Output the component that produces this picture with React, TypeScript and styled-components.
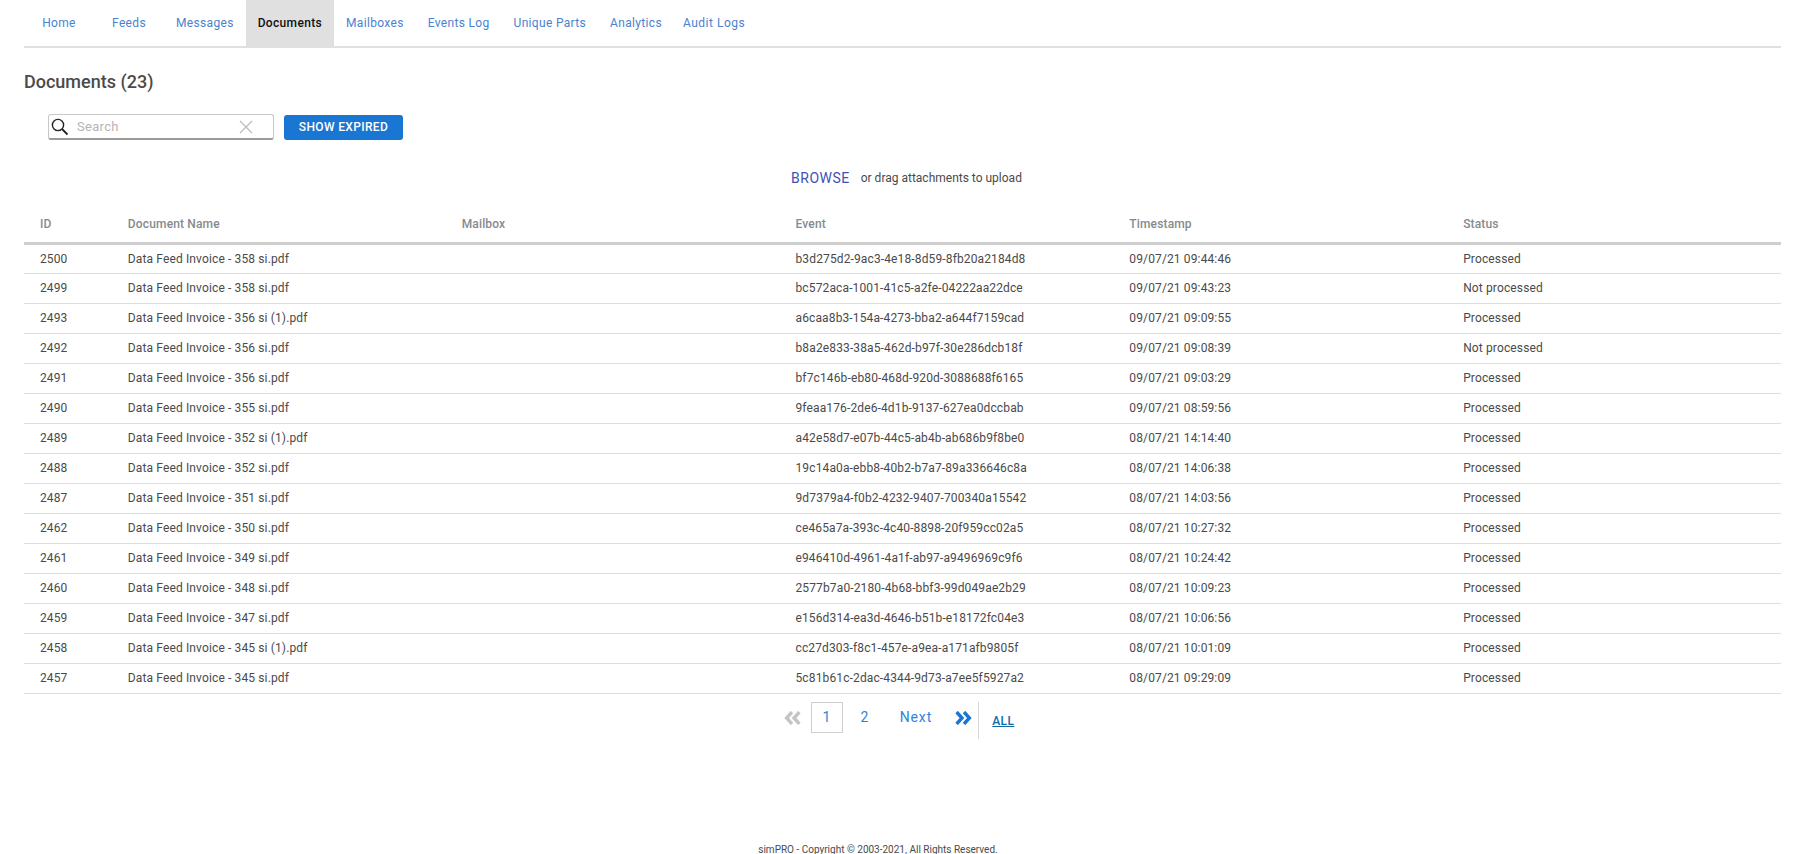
import React from 'react'
import styled, { createGlobalStyle } from 'styled-components'

const GlobalStyle = createGlobalStyle`
html, body {
  margin: 0;
  padding: 0;
  background: #fff;
  overflow: hidden;
  font-family: Roboto, "Liberation Sans", sans-serif;
}
`

const Page = styled.div`
height: 854px;
padding: 0 21px 0 24px;
box-sizing: border-box;
display: flex;
flex-direction: column;
overflow: hidden;
`

const Nav = styled.nav`
display: flex;
height: 46px;
border-bottom: 2px solid #e0e0e0;
flex-shrink: 0;
`

const Tab = styled.a<{ $active?: boolean; $tight?: boolean }>`
display: flex;
align-items: center;
justify-content: center;
box-sizing: border-box;
min-width: 70px;
padding: 0 ${p => (p.$tight ? '9px' : '12px')};
font-size: 12px;
letter-spacing: ${p => (p.$tight ? '0.5px' : '0.33px')};
font-weight: ${p => (p.$active ? 500 : 400)};
color: ${p => (p.$active ? '#111' : '#4a82cf')};
background: ${p => (p.$active ? '#e0e0e0' : 'transparent')};
cursor: pointer;
`

const Title = styled.h1`
margin: 22px 0 0;
font-size: 18px;
line-height: 24px;
font-weight: 500;
color: #4a4a4a;
`

const Toolbar = styled.div`
display: flex;
align-items: center;
gap: 10px;
margin: 20px 0 0 24px;
`

const SearchBox = styled.div`
display: flex;
align-items: center;
box-sizing: border-box;
width: 226px;
height: 26px;
padding: 0 20px 0 1px;
border: 1px solid #c8c8c8;
border-bottom: 2px solid #9a9a9a;
border-radius: 3px;
`

const SearchInput = styled.input`
flex: 1;
min-width: 0;
margin-left: 7px;
border: 0;
outline: 0;
padding: 0;
font: 400 13px Roboto, sans-serif;
letter-spacing: 0.3px;
color: #333;
&::placeholder {
  color: #b5b5b5;
  opacity: 1;
}
`

const ExpiredButton = styled.button`
width: 119px;
height: 25px;
padding: 0;
border: 0;
border-radius: 3px;
background: #1976d2;
color: #fff;
font: 500 12px Roboto, sans-serif;
letter-spacing: 0.35px;
text-transform: uppercase;
cursor: pointer;
`

const Upload = styled.div`
display: flex;
align-items: center;
justify-content: center;
gap: 11px;
margin: 26px 0 0 8px;
height: 24px;
`

const Browse = styled.a`
font-size: 14px;
font-weight: 400;
letter-spacing: 0.5px;
color: #3f51b5;
cursor: pointer;
`

const UploadHint = styled.span`
font-size: 12px;
color: #4a4a4a;
`

const Table = styled.table`
width: 100%;
margin-top: 16px;
border-collapse: collapse;
table-layout: fixed;
`

const HeadCell = styled.th<{ $w: string }>`
width: ${p => p.$w};
height: 37px;
padding: 0 16px;
box-sizing: border-box;
border-bottom: 3px solid #cfcfcf;
text-align: left;
font-size: 12px;
font-weight: 500;
letter-spacing: 0.15px;
color: #868a8e;
`

const Cell = styled.td`
height: 30px;
padding: 0 16px;
box-sizing: border-box;
border-bottom: 1px solid #dedede;
font-size: 12px;
letter-spacing: 0.13px;
color: #4a4a4a;
white-space: nowrap;
`

const Pager = styled.div`
display: flex;
align-items: flex-start;
justify-content: center;
height: 37px;
margin: 8px 0 0 -7px;
flex-shrink: 0;
`

const PagerArrow = styled.span`
display: flex;
align-items: center;
height: 33px;
cursor: pointer;
`

const PageLink = styled.a<{ $current?: boolean }>`
display: flex;
align-items: center;
justify-content: center;
box-sizing: border-box;
min-width: 32px;
height: 31px;
margin-left: ${p => (p.$current ? '10px' : '6px')};
font-size: 14px;
letter-spacing: 0.6px;
color: #2f84d8;
border: 1px solid ${p => (p.$current ? '#cfcfcf' : 'transparent')};
cursor: pointer;
`

const NextLink = styled(PageLink)`
margin: 0 22px 0 18px;
letter-spacing: 0.9px;
`

const AllLink = styled.a`
align-self: stretch;
display: flex;
align-items: center;
margin-left: 6px;
padding: 2px 0 0 13px;
border-left: 1px solid #d6d6d6;
font-size: 12px;
font-weight: 500;
letter-spacing: 0.4px;
color: #0f6aa3;
text-decoration: underline;
cursor: pointer;
`

const Footer = styled.footer`
margin: auto 0 -2px;
padding-right: 49px;
height: 12px;
line-height: 12px;
font-size: 10px;
text-align: center;
color: #4a4a4a;
`

const tabs = ['Home', 'Feeds', 'Messages', 'Documents', 'Mailboxes', 'Events Log', 'Unique Parts', 'Analytics', 'Audit Logs']

const rows = [
  ['2500', 'Data Feed Invoice - 358 si.pdf', 'b3d275d2-9ac3-4e18-8d59-8fb20a2184d8', '09/07/21 09:44:46', 'Processed'],
  ['2499', 'Data Feed Invoice - 358 si.pdf', 'bc572aca-1001-41c5-a2fe-04222aa22dce', '09/07/21 09:43:23', 'Not processed'],
  ['2493', 'Data Feed Invoice - 356 si (1).pdf', 'a6caa8b3-154a-4273-bba2-a644f7159cad', '09/07/21 09:09:55', 'Processed'],
  ['2492', 'Data Feed Invoice - 356 si.pdf', 'b8a2e833-38a5-462d-b97f-30e286dcb18f', '09/07/21 09:08:39', 'Not processed'],
  ['2491', 'Data Feed Invoice - 356 si.pdf', 'bf7c146b-eb80-468d-920d-3088688f6165', '09/07/21 09:03:29', 'Processed'],
  ['2490', 'Data Feed Invoice - 355 si.pdf', '9feaa176-2de6-4d1b-9137-627ea0dccbab', '09/07/21 08:59:56', 'Processed'],
  ['2489', 'Data Feed Invoice - 352 si (1).pdf', 'a42e58d7-e07b-44c5-ab4b-ab686b9f8be0', '08/07/21 14:14:40', 'Processed'],
  ['2488', 'Data Feed Invoice - 352 si.pdf', '19c14a0a-ebb8-40b2-b7a7-89a336646c8a', '08/07/21 14:06:38', 'Processed'],
  ['2487', 'Data Feed Invoice - 351 si.pdf', '9d7379a4-f0b2-4232-9407-700340a15542', '08/07/21 14:03:56', 'Processed'],
  ['2462', 'Data Feed Invoice - 350 si.pdf', 'ce465a7a-393c-4c40-8898-20f959cc02a5', '08/07/21 10:27:32', 'Processed'],
  ['2461', 'Data Feed Invoice - 349 si.pdf', 'e946410d-4961-4a1f-ab97-a9496969c9f6', '08/07/21 10:24:42', 'Processed'],
  ['2460', 'Data Feed Invoice - 348 si.pdf', '2577b7a0-2180-4b68-bbf3-99d049ae2b29', '08/07/21 10:09:23', 'Processed'],
  ['2459', 'Data Feed Invoice - 347 si.pdf', 'e156d314-ea3d-4646-b51b-e18172fc04e3', '08/07/21 10:06:56', 'Processed'],
  ['2458', 'Data Feed Invoice - 345 si (1).pdf', 'cc27d303-f8c1-457e-a9ea-a171afb9805f', '08/07/21 10:01:09', 'Processed'],
  ['2457', 'Data Feed Invoice - 345 si.pdf', '5c81b61c-2dac-4344-9d73-a7ee5f5927a2', '08/07/21 09:29:09', 'Processed'],
]

const SearchIcon = () => (
  <svg width="20" height="20" viewBox="0 0 20 20" fill="none" stroke="#222" strokeWidth="1.4">
    <circle cx="8" cy="8" r="5.6" />
    <path d="M12 12l5.5 5.5" strokeWidth="1.8" />
  </svg>
)

const ClearIcon = () => (
  <svg width="14" height="14" viewBox="0 0 14 14" stroke="#bdbdbd" strokeWidth="1.3" fill="none">
    <path d="M1 1l12 12M13 1L1 13" />
  </svg>
)

const DoubleLeft = () => (
  <svg width="17" height="14" viewBox="0 0 17 14" fill="none" stroke="#c4c4c4" strokeWidth="3.4">
    <path d="M8 1L2.6 7 8 13M15.4 1L10 7l5.4 6" />
  </svg>
)

const DoubleRight = () => (
  <svg width="17" height="14" viewBox="0 0 17 14" fill="none" stroke="#1976d2" strokeWidth="3.4">
    <path d="M1.6 1L7 7l-5.4 6M9 1l5.4 6L9 13" />
  </svg>
)

const App = () => {
  return (
    <Page>
      <GlobalStyle />
      <Nav>
        {tabs.map(t => (
          <Tab key={t} $active={t === 'Documents'} $tight={t === 'Audit Logs'}>{t}</Tab>
        ))}
      </Nav>
      <Title>Documents (23)</Title>
      <Toolbar>
        <SearchBox>
          <SearchIcon />
          <SearchInput placeholder="Search" />
          <ClearIcon />
        </SearchBox>
        <ExpiredButton>Show Expired</ExpiredButton>
      </Toolbar>
      <Upload>
        <Browse>BROWSE</Browse>
        <UploadHint>or drag attachments to upload</UploadHint>
      </Upload>
      <Table>
        <thead>
          <tr>
            <HeadCell $w="5%">ID</HeadCell>
            <HeadCell $w="19%">Document Name</HeadCell>
            <HeadCell $w="19%">Mailbox</HeadCell>
            <HeadCell $w="19%">Event</HeadCell>
            <HeadCell $w="19%">Timestamp</HeadCell>
            <HeadCell $w="19%">Status</HeadCell>
          </tr>
        </thead>
        <tbody>
          {rows.map(r => (
            <tr key={r[0]}>
              <Cell>{r[0]}</Cell>
              <Cell>{r[1]}</Cell>
              <Cell />
              <Cell>{r[2]}</Cell>
              <Cell>{r[3]}</Cell>
              <Cell>{r[4]}</Cell>
            </tr>
          ))}
        </tbody>
      </Table>
      <Pager>
        <PagerArrow><DoubleLeft /></PagerArrow>
        <PageLink $current>1</PageLink>
        <PageLink>2</PageLink>
        <NextLink>Next</NextLink>
        <PagerArrow><DoubleRight /></PagerArrow>
        <AllLink>ALL</AllLink>
      </Pager>
      <Footer>simPRO - Copyright © 2003-2021, All Rights Reserved.</Footer>
    </Page>
  )
}

export default App
